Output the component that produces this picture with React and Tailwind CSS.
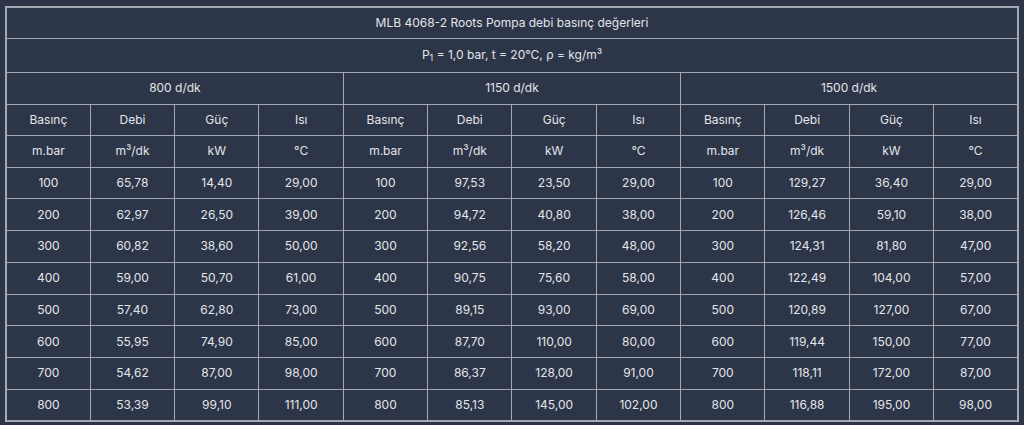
const GROUPS = [
  {
    speed: "800 d/dk",
    rows: [
      ["100", "65,78", "14,40", "29,00"],
      ["200", "62,97", "26,50", "39,00"],
      ["300", "60,82", "38,60", "50,00"],
      ["400", "59,00", "50,70", "61,00"],
      ["500", "57,40", "62,80", "73,00"],
      ["600", "55,95", "74,90", "85,00"],
      ["700", "54,62", "87,00", "98,00"],
      ["800", "53,39", "99,10", "111,00"],
    ],
  },
  {
    speed: "1150 d/dk",
    rows: [
      ["100", "97,53", "23,50", "29,00"],
      ["200", "94,72", "40,80", "38,00"],
      ["300", "92,56", "58,20", "48,00"],
      ["400", "90,75", "75,60", "58,00"],
      ["500", "89,15", "93,00", "69,00"],
      ["600", "87,70", "110,00", "80,00"],
      ["700", "86,37", "128,00", "91,00"],
      ["800", "85,13", "145,00", "102,00"],
    ],
  },
  {
    speed: "1500 d/dk",
    rows: [
      ["100", "129,27", "36,40", "29,00"],
      ["200", "126,46", "59,10", "38,00"],
      ["300", "124,31", "81,80", "47,00"],
      ["400", "122,49", "104,00", "57,00"],
      ["500", "120,89", "127,00", "67,00"],
      ["600", "119,44", "150,00", "77,00"],
      ["700", "118,11", "172,00", "87,00"],
      ["800", "116,88", "195,00", "98,00"],
    ],
  },
];

const LABELS = ["Basınç", "Debi", "Güç", "Isı"];
const UNITS = ["m.bar", "m³/dk", "kW", "°C"];

const CELL = "border border-[#a4a9b4] px-2 py-0 text-center align-middle leading-none";

export default function App() {
  return (
    <div className="min-h-[425px] bg-[#2d3548] pt-[6px] pl-[5px] font-['Inter',sans-serif] text-[12px] text-[#e3e5ea]">
      <table className="w-[1014px] table-fixed border-collapse border-2 border-[#a4a9b4]">
        <tbody>
          <tr className="h-[31px]">
            <td colSpan={12} className={CELL}>
              MLB 4068-2 Roots Pompa debi basınç değerleri
            </td>
          </tr>
          <tr className="h-[34px]">
            <td colSpan={12} className={CELL}>
              P<sub className="text-[9px]">1</sub> = 1,0 bar, t = 20°C, ρ = kg/m³
            </td>
          </tr>
          <tr className="h-[32px]">
            {GROUPS.map((g) => (
              <td key={g.speed} colSpan={4} className={CELL}>
                {g.speed}
              </td>
            ))}
          </tr>
          <tr className="h-[31px]">
            {GROUPS.map((g) =>
              LABELS.map((l) => (
                <td key={g.speed + l} className={CELL}>
                  {l}
                </td>
              )),
            )}
          </tr>
          <tr className="h-[32px]">
            {GROUPS.map((g) =>
              UNITS.map((u, i) => (
                <td key={g.speed + i} className={CELL}>
                  {u}
                </td>
              )),
            )}
          </tr>
          {GROUPS[0].rows.map((_, r) => (
            <tr key={r} className="h-[31.75px]">
              {GROUPS.map((g) =>
                g.rows[r].map((v, i) => (
                  <td key={g.speed + i} className={CELL}>
                    {v}
                  </td>
                )),
              )}
            </tr>
          ))}
        </tbody>
      </table>
    </div>
  );
}
